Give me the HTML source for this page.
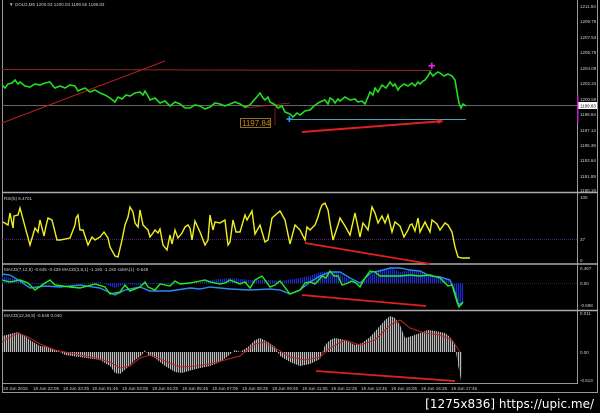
<!DOCTYPE html>
<html><head><style>
html,body{margin:0;padding:0;background:#000;width:600px;height:413px;overflow:hidden}
svg{display:block}
text{font-family:"Liberation Sans",sans-serif;font-size:4.5px;fill:#ccc}
</style></head><body>
<svg width="600" height="413" viewBox="0 0 600 413" xmlns="http://www.w3.org/2000/svg">
<defs>
<pattern id="st" width="2" height="4" patternUnits="userSpaceOnUse"><rect width="1.2" height="4" fill="#bbb"/></pattern>
<pattern id="bs" width="2" height="4" patternUnits="userSpaceOnUse"><rect width="1.2" height="4" fill="#1a2acc"/></pattern>
</defs>
<rect width="600" height="413" fill="#000"/>
<g stroke="#999" stroke-width="1" fill="none">
<line x1="2.5" y1="0" x2="2.5" y2="392"/>
<line x1="577.5" y1="0" x2="577.5" y2="383"/>
<line x1="597.5" y1="0" x2="597.5" y2="392"/>
<line x1="2" y1="383.5" x2="578" y2="383.5"/>
<line x1="2" y1="392.5" x2="598" y2="392.5"/>
</g>
<g stroke="#aaa" stroke-width="1.5">
<line x1="2" y1="192.5" x2="598" y2="192.5"/>
<line x1="2" y1="264" x2="598" y2="264"/>
<line x1="2" y1="310.5" x2="598" y2="310.5"/>
</g>
<text x="9" y="6">▼ GOLD,M5  1200.03 1200.03 1199.55 1199.83</text>
<line x1="2" y1="105.5" x2="577" y2="105.5" stroke="#666" stroke-width="1"/>
<line x1="2" y1="69.5" x2="432" y2="70.5" stroke="#8a2a1a" stroke-width="1"/>
<line x1="2" y1="123" x2="165" y2="61" stroke="#b02020" stroke-width="1"/>
<line x1="290" y1="119.5" x2="466" y2="119.5" stroke="#4aa0b0" stroke-width="1"/>
<line x1="244" y1="108" x2="290" y2="103" stroke="#b02020" stroke-width="0.8"/>
<line x1="275" y1="108" x2="275" y2="125" stroke="#b02020" stroke-width="0.8"/>
<polyline fill="none" stroke="#22dd22" stroke-width="1.6" points="2,85 5,88 8,84 12,83 15,80 18,84 20,82 25,86 30,87 35,84 40,85 45,83 50,82 53,86 55,88 60,86 65,88 70,85 75,86 78,91 80,90 85,88 90,92 95,90 100,93 105,95 110,98 115,102 118,97 122,99 126,95 130,96 135,93 140,92 143,95 145,91 148,96 150,100 155,98 160,103 165,101 170,106 175,102 180,104 185,108 190,108 195,105 200,106 205,109 210,107 215,103 220,104 225,106 230,104 235,102 240,104 245,107 250,105 254,100 256,98 260,93 263,98 265,100 268,97 270,102 274,104 278,108 282,106 285,112 290,114 293,117 297,113 300,115 305,111 310,110 314,106 318,103 322,101 325,100 328,104 330,98 333,100 335,103 338,99 340,101 345,97 350,100 355,99 358,102 362,101 365,104 368,97 370,92 373,95 375,88 378,92 382,85 386,88 390,82 393,86 395,84 398,90 400,87 404,84 408,86 412,83 415,86 418,82 420,84 423,81 425,80 428,76 430,72 433,76 435,74 438,72 440,73 444,76 448,74 452,76 455,80 457,92 459,103 461,108 463,104 466,106"/>
<text x="428" y="69" style="font-size:9px;fill:#e020e0">✚</text>
<text x="286" y="122" style="font-size:8px;fill:#2a9cf0">✚</text>
<rect x="240.5" y="118.5" width="30" height="9" fill="#000" stroke="#c08a20" stroke-width="0.8"/>
<text x="242" y="126" style="font-size:8px;fill:#c08a20">1197.84</text>
<line x1="302" y1="132" x2="438" y2="121.5" stroke="#e02020" stroke-width="2"/>
<polygon points="444,121 437,119 438,124" fill="#e02020"/>
<g style="font-size:4px">
<text x="580" y="8">1211.84</text><text x="580" y="23">1209.79</text><text x="580" y="39">1207.54</text>
<text x="580" y="54">1205.79</text><text x="580" y="70">1204.09</text><text x="580" y="85">1202.24</text>
<text x="580" y="101">1200.59</text>
<rect x="578" y="102" width="19" height="7" fill="#fff"/>
<text x="580" y="107.5" style="fill:#000">1199.83</text>
<rect x="577" y="95" width="1.5" height="28" fill="#c020c0"/>
<text x="580" y="116">1198.84</text><text x="580" y="132">1197.14</text>
<text x="580" y="147">1195.39</text><text x="580" y="162">1193.64</text><text x="580" y="178">1191.89</text>
<text x="580" y="192">1190.19</text>
</g>
<text x="4" y="200">RSI(5) 6.4701</text>
<line x1="2" y1="239.5" x2="577" y2="239.5" stroke="#6a2aa0" stroke-width="0.8" stroke-dasharray="1,1"/>
<polyline fill="none" stroke="#f0f020" stroke-width="1.4" points="3,222 8,225 10,213 13,228 14,216 18,215 20,208 27,234 30,245 35,228 38,232 40,220 44,236 46,226 48,218 52,220 57,240 60,240 70,238 75,225 76,218 78,215 80,230 83,230 88,245 92,237 95,240 100,237 104,232 108,238 110,247 115,256 118,257 122,240 125,225 128,217 130,207 133,212 135,223 138,227 140,210 143,225 148,230 150,237 153,233 155,230 158,233 160,229 163,245 167,250 170,235 172,244 175,230 178,238 182,233 185,227 188,225 190,228 192,240 195,221 200,232 205,245 208,240 210,215 213,230 215,222 220,223 225,220 228,245 230,242 233,220 236,232 240,232 245,215 247,220 252,211 255,234 260,225 265,242 268,240 272,218 280,211 285,220 290,244 295,225 300,230 305,240 307,227 310,230 315,225 318,217 320,210 322,205 325,203 328,210 330,223 333,240 338,225 340,218 345,226 350,235 355,213 360,237 363,223 366,227 368,230 372,207 375,213 378,223 382,216 385,223 388,215 392,232 395,222 400,226 404,237 408,230 410,225 412,224 415,231 418,218 420,232 425,222 430,232 432,220 437,224 440,230 445,223 448,225 452,232 455,247 458,257 462,258 466,258 470,258"/>
<line x1="305" y1="243" x2="430" y2="264" stroke="#e02020" stroke-width="1.8"/>
<text x="580" y="199">100</text><text x="580" y="241">37</text><text x="580" y="262">0</text>
<text x="4" y="271">MACD(7,12,5) -0.645 -0.429  MACD(2,8,1) -1.192 -1.192  ssMA(1) -0.645</text>
<line x1="2" y1="283.5" x2="577" y2="283.5" stroke="#553" stroke-width="0.6" stroke-dasharray="1,1"/>
<polygon fill="url(#bs)" points="2,276 10,278 20,280 30,284 40,284 60,283 80,283 100,282 115,288 125,284 140,285 150,284 170,284 200,282 210,280 230,278 250,280 270,280 280,281 300,278 310,276 320,272 335,271 350,280 360,285 372,274 380,269 390,268 400,272 410,270 420,270 430,275 440,276 450,280 455,290 458,300 461,305 463,302 463,283 2,283"/>
<polyline fill="none" stroke="#2a8cf0" stroke-width="1.4" points="2,274 10,275 20,281 30,288 45,286 60,287 80,285 100,288 115,295 125,290 140,287 150,291 170,291 190,288 200,289 210,287 230,289 250,290 270,289 280,290 290,294 300,290 310,282 320,276 330,272 340,272 350,278 360,283 372,272 380,271 390,268 400,268 410,270 420,271 430,276 440,277 450,280 455,292 458,303 461,305 463,302"/>
<polyline fill="none" stroke="#22ee22" stroke-width="1.4" points="2,280 10,282 20,280 28,283 35,290 45,283 50,280 55,285 70,287 80,288 95,284 105,287 110,294 120,292 125,285 130,291 140,287 145,282 148,287 155,290 160,284 170,286 175,281 180,284 190,283 200,281 205,280 210,282 220,284 225,283 230,280 240,284 245,282 250,288 255,280 262,276 270,287 275,285 280,281 290,294 300,290 305,283 310,282 315,284 318,281 322,276 326,278 330,271 334,276 338,276 342,285 348,283 352,281 356,283 360,287 365,278 370,271 375,272 380,276 390,276 400,276 410,275 420,276 430,275 440,278 448,286 452,285 455,295 457,302 459,307 461,304 463,302"/>
<line x1="302" y1="295" x2="426" y2="306" stroke="#e02020" stroke-width="1.8"/>
<text x="580" y="270">0.467</text><text x="580" y="285">0.00</text><text x="580" y="307">-0.698</text>
<text x="4" y="317">MACD(12,26,9) -0.548 0.040</text>
<polygon fill="url(#st)" points="2,352 2,336 10,334 18,332 25,336 30,340 40,346 48,347 55,350 60,352 65,355 80,357 100,360 110,366 115,373 120,374 128,367 135,360 142,355 145,350 148,355 155,358 165,366 175,372 182,373 192,370 200,368 210,366 220,362 228,356 235,350 240,352 248,347 255,340 260,338 268,342 275,347 280,356 290,362 300,366 310,364 320,359 325,345 330,340 335,338 345,340 355,345 362,343 370,337 378,328 385,320 390,316 395,318 400,325 405,338 412,336 420,333 428,330 435,331 445,333 450,337 455,345 456,352 458,365 460,375 461,381 462,352"/>
<polyline fill="none" stroke="#c02020" stroke-width="1" points="2,342 10,337 18,333 28,337 40,344 55,350 65,352 80,355 95,358 110,362 120,368 130,366 140,358 150,355 165,361 180,367 195,366 210,364 225,360 240,356 255,344 265,342 275,348 290,357 305,360 320,357 330,348 345,340 360,345 375,340 390,325 400,320 410,328 425,333 440,335 452,340 460,352"/>
<line x1="316" y1="371" x2="455" y2="381" stroke="#e02020" stroke-width="1.8"/>
<text x="580" y="315">0.011</text><text x="580" y="354">0.00</text><text x="580" y="382">-0.613</text>
<g style="font-size:3.6px">
<text x="3" y="390">18 Jun 2015</text><text x="33" y="390">18 Jun 22:05</text><text x="63" y="390">18 Jun 23:25</text>
<text x="92" y="390">19 Jun 01:45</text><text x="122" y="390">19 Jun 03:05</text><text x="152" y="390">19 Jun 04:25</text>
<text x="182" y="390">19 Jun 05:45</text><text x="212" y="390">19 Jun 07:05</text><text x="242" y="390">19 Jun 08:25</text>
<text x="272" y="390">19 Jun 09:45</text><text x="302" y="390">19 Jun 11:05</text><text x="331" y="390">19 Jun 12:25</text>
<text x="361" y="390">19 Jun 13:45</text><text x="391" y="390">19 Jun 15:05</text><text x="421" y="390">19 Jun 16:25</text>
<text x="451" y="390">19 Jun 17:45</text>
</g>
<text x="594" y="408" text-anchor="end" style="font-size:12px;fill:#fff;font-family:'DejaVu Sans',sans-serif">[1275x836] https://upic.me/</text>
</svg>
</body></html>
